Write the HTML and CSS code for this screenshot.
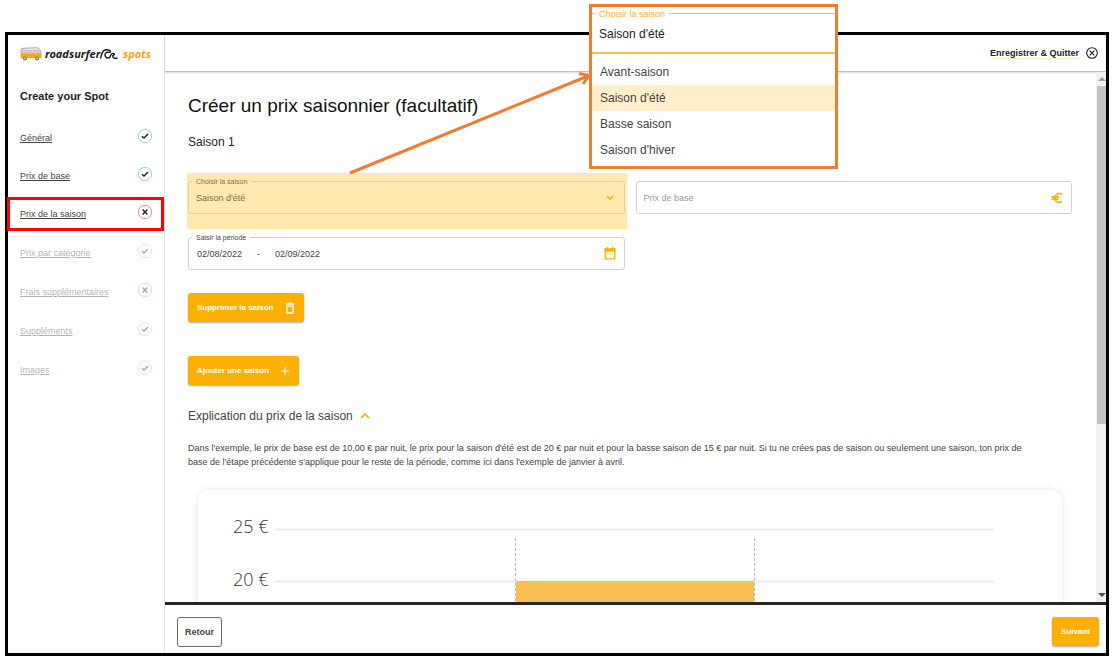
FILE: index.html
```html
<!DOCTYPE html>
<html lang="fr">
<head>
<meta charset="utf-8">
<meta name="viewport" content="width=device-width, initial-scale=1">
<title>roadsurfer spots – Prix de la saison</title>
<link rel="stylesheet" href="styles.css">
</head>
<body>
<svg class="defs" width="0" height="0" aria-hidden="true">
  <symbol id="ok" viewBox="0 0 16 16"><circle cx="8" cy="8" r="6.700" fill="none" stroke="#9ad6c4" stroke-width="1"/><path d="M5 8.200l2 1.900 4-4.100" fill="none" stroke="#222" stroke-width="1.400"/></symbol>
  <symbol id="ko" viewBox="0 0 16 16"><circle cx="8" cy="8" r="6.700" fill="none" stroke="#ff8c92" stroke-width="1"/><path d="M5.600 5.600l4.800 4.800M10.400 5.600l-4.800 4.800" fill="none" stroke="#222" stroke-width="1.400"/></symbol>
</svg>
<div class="frame">
  <aside class="sidebar">
    <a class="logo" href="#" aria-label="roadsurfer spots">
      <svg class="van" viewBox="0 0 22 14" aria-hidden="true">
        <path d="M1 7V3.200Q1 1.500 3 1.300L17 .8Q19 .9 19.800 2.600L21.300 7z" fill="#fff" stroke="#888" stroke-width=".8"/>
        <path d="M2.300 3h3.200v2.400H2.300zM6.700 3h3.400v2.400H6.700zM11.300 3h3.400v2.400h-3.400zM16 3h2.400l1 2.400H16z" fill="#e4e4e4" stroke="#999" stroke-width=".6"/>
        <path d="M.6 6.600h20.800v3.600q0 1-1 1H1.600q-1 0-1-1z" fill="#f9a51a"/>
        <circle cx="5" cy="11.400" r="2" fill="#777"/><circle cx="5" cy="11.400" r=".8" fill="#ddd"/>
        <circle cx="17" cy="11.400" r="2" fill="#777"/><circle cx="17" cy="11.400" r=".8" fill="#ddd"/>
      </svg>
      <span class="brand">roadsurfer</span>
      <svg class="wave" viewBox="0 0 18 14" aria-hidden="true"><path d="M.5 11.500C1.500 6 3 2.800 6.500 2.800C10 2.800 11.500 4.500 9.800 5.300C8.500 5.700 7.500 4.500 6 5.800C4.200 7.500 5 11.300 8.500 11C11 10.800 10 7.500 12 6.600C13.500 6 15 7 14.200 7.700C13 8 12.500 8.700 12.800 9.600C13.200 11.400 15.500 11.800 17.500 11" fill="none" stroke="#1b1b1b" stroke-width="1.400"/></svg>
      <span class="brand brand-spots">spots</span>
    </a>
    <h2 class="side-title">Create your Spot</h2>
    <nav>
      <ul class="steps">
        <li class="step"><a href="#">Général</a><svg class="state"><use href="#ok"/></svg></li>
        <li class="step"><a href="#">Prix de base</a><svg class="state"><use href="#ok"/></svg></li>
        <li class="step step-current"><a href="#" aria-current="step">Prix de la saison</a><svg class="state"><use href="#ko"/></svg></li>
        <li class="step step-off"><a href="#">Prix par catégorie</a><svg class="state"><use href="#ok"/></svg></li>
        <li class="step step-off"><a href="#">Frais supplémentaires</a><svg class="state"><use href="#ko"/></svg></li>
        <li class="step step-off"><a href="#">Suppléments</a><svg class="state"><use href="#ok"/></svg></li>
        <li class="step step-off"><a href="#">Images</a><svg class="state"><use href="#ok"/></svg></li>
      </ul>
    </nav>
  </aside>

  <div class="page">
    <header class="topbar">
      <button class="quit" type="button"><span>Enregistrer &amp; Quitter</span>
        <svg viewBox="0 0 12 12" width="12" height="12" aria-hidden="true"><circle cx="6" cy="6" r="5.300" fill="none" stroke="#222" stroke-width="1.100"/><path d="M3.700 3.700l4.600 4.600M8.300 3.700l-4.600 4.600" stroke="#222" stroke-width="1.200"/></svg>
      </button>
    </header>

    <div class="body">
      <main class="content">
        <h1 class="title">Créer un prix saisonnier (facultatif)</h1>
        <h2 class="season">Saison 1</h2>
        <div class="fields">
          <div class="marked">
            <div class="field">
              <label for="season">Choisir la saison</label>
              <select id="season"><option>Avant-saison</option><option selected>Saison d'été</option><option>Basse saison</option><option>Saison d'hiver</option></select>
              <svg class="chevron" viewBox="0 0 8 6" width="8" height="6" aria-hidden="true"><path d="M1 1l3 3 3-3" fill="none" stroke="#ffb000" stroke-width="1.500"/></svg>
            </div>
          </div>
          <div class="field field-price">
            <input id="price" type="text" placeholder="Prix de base" aria-label="Prix de base">
            <svg viewBox="0 0 12 12" width="12" height="12" aria-hidden="true"><path d="M11 2.600A4.400 4.400 0 1 0 11 9.400M.5 4.900h7.500M.5 7.100h7" fill="none" stroke="#fbb003" stroke-width="1.600"/></svg>
          </div>
          <div class="field field-dates">
            <label for="from">Saisir la période</label>
            <input id="from" type="text" value="02/08/2022"><span>-</span><input id="to" class="to" type="text" value="02/09/2022" aria-label="Fin de la période">
            <svg viewBox="0 0 12 13" width="12" height="13" aria-hidden="true"><path d="M1.200 2h9.600v9.800H1.200z" fill="none" stroke="#fbb003" stroke-width="1.300"/><path d="M.6 1.500h10.800v3.300H.6zM2.500 0h1.500v2H2.500zM8 0h1.500v2H8z" fill="#fbb003"/><path d="M3 7h1.400M5.300 7h1.400M7.600 7H9" stroke="#fbb003" stroke-width="1"/></svg>
          </div>
        </div>
        <button class="btn btn-remove" type="button">Supprimer la saison
          <svg viewBox="0 0 10 12" width="10" height="12" aria-hidden="true"><path d="M1 2h8M3.500 1.200h3M2 4.200h6v6.800H2z" fill="none" stroke="#fff" stroke-width="1.300"/></svg>
        </button>
        <button class="btn btn-add" type="button">Ajouter une saison
          <svg viewBox="0 0 10 10" width="10" height="10" aria-hidden="true"><path d="M5 1v8M1 5h8" stroke="#fff" stroke-width="1.100"/></svg>
        </button>
        <button class="explain" type="button" aria-expanded="true">Explication du prix de la saison
          <svg viewBox="0 0 10 6" width="10" height="6" aria-hidden="true"><path d="M1 5l4-4 4 4" fill="none" stroke="#fbb003" stroke-width="1.700"/></svg>
        </button>
        <p class="text">Dans l'exemple, le prix de base est de 10,00 € par nuit, le prix pour la saison d'été est de 20 € par nuit et pour la basse saison de 15 € par nuit. Si tu ne crées pas de saison ou seulement une saison, ton prix de base de l'étape précédente s'applique pour le reste de la période, comme ici dans l'exemple de janvier à avril.</p>
        <div class="card">
          <svg class="chart" viewBox="0 0 864 160" role="img" aria-label="Prix par saison">
            <path d="M77 39.500h719M77 91.500h719" stroke="#ececed" stroke-width="2"/>
            <path d="M318 91h238v69H318z" fill="#f9c053"/>
            <path d="M317.500 48v112M556.500 48v112" stroke="#b9b9b9" stroke-width="1" stroke-dasharray="3 2"/>
            <text class="tick" x="35" y="43">25 €</text>
            <text class="tick" x="35" y="96">20 €</text>
          </svg>
        </div>
      </main>
      <div class="scroll" aria-hidden="true">
        <svg viewBox="0 0 8 4" width="8" height="4"><path d="M0 4l4-4 4 4z" fill="#a3a3a3"/></svg>
        <div class="thumb"></div>
        <svg viewBox="0 0 8 4" width="8" height="4"><path d="M0 0h8L4 4z" fill="#505050"/></svg>
      </div>
    </div>

    <footer class="bottom">
      <button class="back" type="button">Retour</button>
      <button class="btn next" type="button">Suivant</button>
    </footer>
  </div>
</div>

<svg class="arrow" viewBox="0 0 250 110" width="250" height="110" aria-hidden="true"><path d="M5 106L243 9M234 6.500L244 8.500L238 17" fill="none" stroke="#ed7d31" stroke-width="3"/></svg>
<section class="callout" aria-label="Choisir la saison">
  <div class="combo"><span class="combo-label">Choisir la saison</span>Saison d'été</div>
  <ul class="options" role="listbox" aria-label="Saisons">
    <li role="option">Avant-saison</li>
    <li role="option" aria-selected="true" class="selected">Saison d'été</li>
    <li role="option">Basse saison</li>
    <li role="option">Saison d'hiver</li>
  </ul>
</section>
</body>
</html>
```
FILE: styles.css
```css
* { box-sizing: border-box; }
body {
  margin: 0;
  padding: 32px 11px 4px 5px;
  height: 100vh;
  position: relative;
  background: #fff;
  color: #222;
  font-family: "Liberation Sans", Arial, sans-serif;
  font-size: 9px;
}
button, input, select { font: inherit; color: inherit; }
button { cursor: pointer; }
h1, h2, p, ul { margin: 0; padding: 0; }
ul { list-style: none; }
.defs { position: absolute; }

.frame {
  display: flex;
  height: 100%;
  border: 3px solid #000;
}

.sidebar {
  flex: 0 0 157px;
  padding: 11px 11px 0 12px;
  border-right: 1px solid #e4e4e4;
}
.logo {
  display: flex;
  align-items: center;
  height: 16px;
  padding-right: 2px;
  color: #1b1b1b;
  text-decoration: none;
}
.van { width: 22px; height: 14px; margin-right: 3px; }
.wave { width: 18px; height: 14px; }
.brand {
  font: italic bold 11px/16px "Noto Sans", sans-serif;
}
.brand-spots { color: #f9a51a; margin-left: auto; }
.side-title {
  margin-top: 26px;
  font-size: 11px;
  line-height: 16px;
}
.steps { margin-top: 13px; }
.step {
  position: relative;
  display: flex;
  justify-content: space-between;
  align-items: center;
  height: 38px;
  color: #444;
}
.step a { color: inherit; padding-top: 4px; }
.state { width: 16px; height: 16px; }
.step-off { height: 39px; }
.step-off a, .step-off .state { opacity: .4; }
.step-current::after {
  content: "";
  position: absolute;
  inset: 4px -11px 0 -13px;
  border: 3px solid #f00;
  pointer-events: none;
}

.page {
  flex: 1;
  min-width: 0;
  display: flex;
  flex-direction: column;
}
.topbar {
  flex: 0 0 37px;
  display: flex;
  align-items: center;
  justify-content: flex-end;
  padding-right: 8px;
  border-bottom: 1px solid #bdbdbd;
  box-shadow: 0 1px 2px rgba(0, 0, 0, .15);
}
.quit {
  display: flex;
  align-items: center;
  gap: 7px;
  padding: 0;
  border: 0;
  background: none;
  font-weight: bold;
}
.quit span { border-bottom: 1px solid #fdebc8; }

.body {
  flex: 1;
  min-height: 0;
  display: flex;
}
.content {
  flex: 1;
  min-width: 0;
  overflow: hidden;
  display: flex;
  flex-direction: column;
  align-items: flex-start;
  padding: 22px 24px 0 23px;
}
.content > * { flex-shrink: 0; }
.title { font-size: 19px; line-height: 24px; font-weight: normal; color: #111; }
.season { margin-top: 16px; font-size: 12px; line-height: 16px; font-weight: normal; }

.fields {
  align-self: stretch;
  display: grid;
  grid-template-columns: 1fr 1fr;
  column-gap: 11px;
  row-gap: 8px;
  margin-top: 23px;
  align-items: start;
}
.marked {
  margin: 0 -2px 0 -1px;
  padding: 8px 2px 15px 1px;
  background: #ffe9ae;
}
.field {
  position: relative;
  display: flex;
  align-items: center;
  height: 33px;
  padding: 0 8px;
  border: 1px solid #d3d3d3;
  border-radius: 3px;
  color: #444;
}
.marked .field { border-color: #e4cf98; color: #85703c; padding-left: 7px; }
.field label {
  position: absolute;
  top: -5px;
  left: 3px;
  padding: 0 4px;
  font-size: 7px;
  line-height: 9px;
  background: #fff;
}
.marked label { background: #ffe9ae; }
.field select, .field input {
  flex: 1;
  min-width: 0;
  height: 20px;
  padding: 0;
  border: 0;
  outline: 0;
  background: none;
  appearance: none;
}
.field input::placeholder { color: #999; opacity: 1; }
.chevron { margin-right: 2px; }
.field-price { margin-top: 8px; padding-left: 7px; }
.field-dates input { flex: 0 0 60px; }
.field-dates span { flex: 0 0 18px; }
.field-dates svg { margin-left: auto; }

.btn {
  display: flex;
  align-items: center;
  justify-content: center;
  height: 29px;
  padding: 0 9px;
  border: 0;
  border-radius: 3px;
  background: #fbb003;
  box-shadow: 0 1px 2px rgba(0, 0, 0, .35);
  color: #fff;
  font-weight: bold;
  font-size: 8px;
  white-space: nowrap;
}
.btn-remove { margin-top: 23px; gap: 12px; }
.btn-add { margin-top: 34px; gap: 11px; }
.explain {
  display: flex;
  align-items: center;
  gap: 7px;
  margin-top: 23px;
  padding: 0;
  border: 0;
  background: none;
  color: #444;
  font-size: 12px;
  line-height: 16px;
}
.text { margin-top: 17px; padding-right: 40px; line-height: 14px; color: #444; }
.card {
  align-self: stretch;
  margin: 21px 10px 0;
  border-radius: 12px;
  box-shadow: 0 0 8px rgba(0, 0, 0, .1);
}
.chart { display: block; width: 100%; }
.tick { font: 300 18px "Open Sans", sans-serif; fill: #333; }

.scroll {
  flex: 0 0 10px;
  display: flex;
  flex-direction: column;
  align-items: flex-end;
  gap: 5px;
  overflow: hidden;
  padding: 5px 0;
  background: #f1f1f1;
}
.thumb {
  flex: 0 0 65%;
  width: 9px;
  margin-bottom: auto;
  background: #c1c1c1;
}

.bottom {
  flex: 0 0 51px;
  display: flex;
  align-items: center;
  justify-content: space-between;
  padding: 5px 7px 0 12px;
  border-top: 3px solid #20282a;
}
.back {
  height: 30px;
  padding: 0 7px;
  border: 1px solid #666;
  border-radius: 3px;
  background: #fff;
  color: #444;
  font-weight: bold;
}
.next { padding: 0 9px; }

.arrow { position: absolute; left: 345px; top: 67px; }
.callout {
  position: absolute;
  left: 589px;
  top: 4px;
  width: 249px;
  padding: 6px 0 3px;
  border: 3px solid #ed7d31;
  background: #fff;
  color: #444;
  font-size: 12px;
}
.combo {
  position: relative;
  height: 41px;
  padding: 0 7px;
  border-top: 1px solid #fbc34a;
  border-bottom: 2px solid #f9c04a;
  line-height: 41px;
  color: #222;
}
.combo-label {
  position: absolute;
  top: -6px;
  left: 3px;
  padding: 0 4px;
  font-size: 9px;
  line-height: 12px;
  background: #fff;
  color: #fbb034;
}
.options { padding-top: 5px; }
.options li { padding: 0 8px; line-height: 26px; }
.options .selected { background: #ffeecb; }
```
